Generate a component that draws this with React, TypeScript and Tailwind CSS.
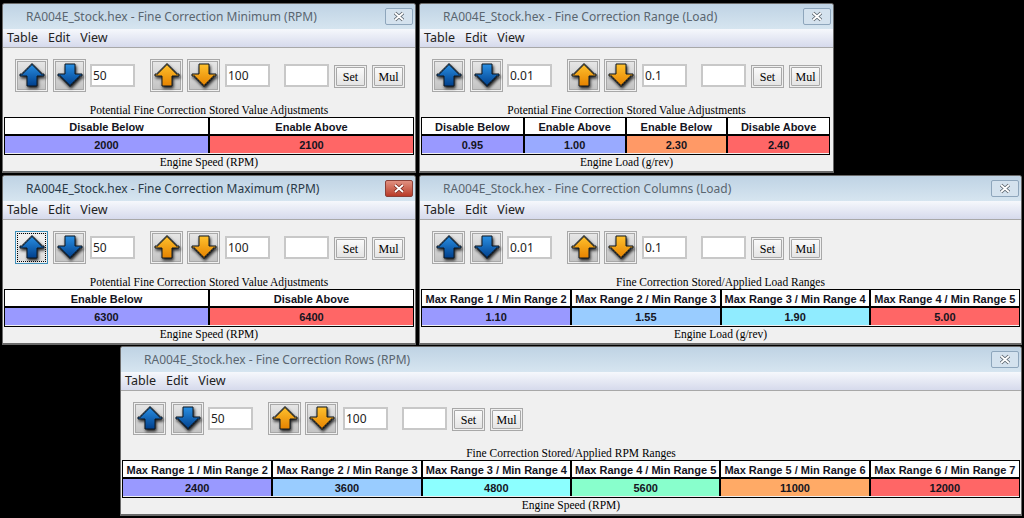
import React from "react";

const serif = "font-['Liberation_Serif',serif]";
const sans = "font-['Liberation_Sans',sans-serif]";
const ui = "font-['Noto_Sans',sans-serif]";

type Cell = { label: string; value: string; color: string };

type WindowProps = {
  title: string;
  caption: string;
  footer: string;
  position: string;
  tableWidth: string;
  cells: Cell[];
  fine?: boolean;
  active?: boolean;
  focused?: boolean;
};

function Arrow({ dir, tone }: { dir: "up" | "down"; tone: "blue" | "orange" }) {
  const id = `${tone}-${dir}`;
  const light = tone === "blue" ? "#2a90e4" : "#ffc22e";
  const dark = tone === "blue" ? "#003f8c" : "#e58200";
  const points =
    dir === "up"
      ? "12,1 14,1 14,3 16,3 16,5 18,5 18,7 20,7 20,9 22,9 22,11 25,11 25,13 18,13 18,23 8,23 8,13 1,13 1,11 4,11 4,9 6,9 6,7 8,7 8,5 10,5 10,3 12,3"
      : "8,1 18,1 18,11 25,11 25,13 22,13 22,15 20,15 20,17 18,17 18,19 16,19 16,21 14,21 14,23 12,23 12,21 10,21 10,19 8,19 8,17 6,17 6,15 4,15 4,13 1,13 1,11 8,11";
  return (
    <svg
      width="26"
      height="25"
      viewBox="0 0 26 25"
      className="drop-shadow-[1px_2px_1.5px_rgba(0,0,0,0.85)]"
    >
      <defs>
        <linearGradient id={id} x1="0" y1="0" x2="0" y2="1">
          <stop offset="0" stopColor={light} />
          <stop offset="1" stopColor={dark} />
        </linearGradient>
      </defs>
      <polygon points={points} fill={`url(#${id})`} stroke="#0c1620" strokeWidth="1" />
    </svg>
  );
}

function ArrowButton({
  dir,
  tone,
  focused,
}: {
  dir: "up" | "down";
  tone: "blue" | "orange";
  focused?: boolean;
}) {
  return (
    <button
      className={`flex h-[33px] w-[33px] items-center justify-center border bg-[#f0f0f0] p-px ${
        focused ? "border-[#3f8fb8]" : "border-[#a8a8a8]"
      }`}
    >
      <span
        className={`flex h-full w-full items-center justify-center border bg-gradient-to-b ${
          focused
            ? "border-dotted border-black from-[#f2f2f2] to-[#dcdcdc]"
            : "border-[#a8a8a8] from-[#e6e6e6] to-[#c4c4c4]"
        }`}
      >
        <Arrow dir={dir} tone={tone} />
      </span>
    </button>
  );
}

function Field({ value }: { value?: string }) {
  return (
    <div
      className={`flex h-[23px] w-[45px] items-center border-2 border-[#c8c8c8] bg-white pl-[1px] text-[12px] text-[#222] ${ui}`}
    >
      {value}
    </div>
  );
}

function TextButton({ label }: { label: string }) {
  return (
    <button className="h-[23px] w-[33px] border border-[#a8a8a8] bg-[#f0f0f0] p-px">
      <span
        className={`flex h-full w-full items-center justify-center rounded-[1px] border border-[#a8a8a8] bg-gradient-to-b from-[#fafafa] to-[#e4e4e4] text-[12px] text-black ${serif}`}
      >
        {label}
      </span>
    </button>
  );
}

function FineWindow({
  title,
  caption,
  footer,
  position,
  tableWidth,
  cells,
  fine,
  active,
  focused,
}: WindowProps) {
  return (
    <div
      className={`absolute flex h-[170px] flex-col overflow-hidden rounded-t-[3px] border border-b-2 border-[#6a6a6a] bg-[#f0f0f0] ${position}`}
    >
      <div className="flex h-[25px] shrink-0 items-center justify-between bg-gradient-to-b from-[#bfd3e4] to-[#d6e5f0] pl-[23px] pr-[2px]">
        <span
          className={`text-[12px] ${ui} ${active ? "text-[#2a3a48]" : "text-[#5a6670]"}`}
        >
          {title}
        </span>
        <span
          className={`flex h-[17px] w-[28px] items-center justify-center rounded-[2px] border ${
            active
              ? "border-[#8a4038] bg-gradient-to-b from-[#e09080] to-[#b83a28]"
              : "border-[#8ea6bc] bg-[#d4e2ee]"
          }`}
        >
          <svg width="14" height="11" viewBox="0 0 14 11">
            <path
              d="M3 2 L11 9 M11 2 L3 9"
              stroke={active ? "#7a2a20" : "#5a646e"}
              strokeWidth="3.6"
              fill="none"
            />
            <path
              d="M3 2 L11 9 M11 2 L3 9"
              stroke="#fff"
              strokeWidth="1.8"
              fill="none"
            />
          </svg>
        </span>
      </div>
      <div
        className={`flex h-[19px] shrink-0 items-center gap-[10px] border-b border-[#a8a8a8] bg-gradient-to-b from-[#f6f8fc] to-[#d6daec] pl-[4px] text-[12.5px] text-[#222] ${ui}`}
      >
        <span>Table</span>
        <span>Edit</span>
        <span>View</span>
      </div>
      <div className="mt-[11px] flex items-center pl-[12px]">
        <ArrowButton dir="up" tone="blue" focused={focused} />
        <div className="ml-[5px]">
          <ArrowButton dir="down" tone="blue" />
        </div>
        <div className="ml-[4px]">
          <Field value={fine ? "0.01" : "50"} />
        </div>
        <div className="ml-[15px]">
          <ArrowButton dir="up" tone="orange" />
        </div>
        <div className="ml-[4px]">
          <ArrowButton dir="down" tone="orange" />
        </div>
        <div className="ml-[5px]">
          <Field value={fine ? "0.1" : "100"} />
        </div>
        <div className="ml-[14px]">
          <Field />
        </div>
        <div className="ml-[5px]">
          <TextButton label="Set" />
        </div>
        <div className="ml-[5px]">
          <TextButton label="Mul" />
        </div>
      </div>
      <div
        className={`mt-[10px] h-[15px] text-center text-[11.5px] leading-[17px] text-black ${serif}`}
      >
        {caption}
      </div>
      <div
        className={`ml-[1px] grid grid-flow-col grid-rows-2 border border-black ${tableWidth}`}
      >
        {cells.flatMap((cell, i) => {
          const sides = `${i > 0 ? "border-l" : ""} ${
            i < cells.length - 1 ? "border-r" : ""
          }`;
          return [
            <div
              key={`${cell.label}-head`}
              className={`flex h-[18px] items-center justify-center whitespace-nowrap border-b-2 border-black bg-white pt-[2px] text-[11px] font-bold text-[#14141e] ${sans} ${sides}`}
            >
              {cell.label}
            </div>,
            <div
              key={`${cell.label}-value`}
              className={`flex h-[17px] items-center justify-center border-black pt-[2px] text-[11px] font-bold text-[#14141e] ${sans} ${cell.color} ${sides}`}
            >
              {cell.value}
            </div>,
          ];
        })}
      </div>
      <div
        className={`h-[15px] text-center text-[11.5px] leading-[15px] text-black ${serif}`}
      >
        {footer}
      </div>
    </div>
  );
}

export default function App() {
  return (
    <div className="relative h-[518px] w-[1024px] overflow-hidden bg-black">
      <FineWindow
        position="left-[2px] top-[3px] w-[414px]"
        tableWidth="mr-[1px] grid-cols-2"
        title="RA004E_Stock.hex - Fine Correction Minimum (RPM)"
        caption="Potential Fine Correction Stored Value Adjustments"
        footer="Engine Speed (RPM)"
        cells={[
          { label: "Disable Below", value: "2000", color: "bg-[#9999ff]" },
          { label: "Enable Above", value: "2100", color: "bg-[#ff6666]" },
        ]}
      />
      <FineWindow
        position="left-[419px] top-[3px] w-[415px]"
        tableWidth="mr-[3px] grid-cols-4"
        fine
        title="RA004E_Stock.hex - Fine Correction Range (Load)"
        caption="Potential Fine Correction Stored Value Adjustments"
        footer="Engine Load (g/rev)"
        cells={[
          { label: "Disable Below", value: "0.95", color: "bg-[#9999ff]" },
          { label: "Enable Above", value: "1.00", color: "bg-[#99aaff]" },
          { label: "Enable Below", value: "2.30", color: "bg-[#ff9966]" },
          { label: "Disable Above", value: "2.40", color: "bg-[#ff6666]" },
        ]}
      />
      <FineWindow
        position="left-[2px] top-[175px] w-[414px]"
        tableWidth="mr-[1px] grid-cols-2"
        active
        focused
        title="RA004E_Stock.hex - Fine Correction Maximum (RPM)"
        caption="Potential Fine Correction Stored Value Adjustments"
        footer="Engine Speed (RPM)"
        cells={[
          { label: "Enable Below", value: "6300", color: "bg-[#9999ff]" },
          { label: "Disable Above", value: "6400", color: "bg-[#ff6666]" },
        ]}
      />
      <FineWindow
        position="left-[419px] top-[175px] w-[603px]"
        tableWidth="mr-[1px] grid-cols-4"
        fine
        title="RA004E_Stock.hex - Fine Correction Columns (Load)"
        caption="Fine Correction Stored/Applied Load Ranges"
        footer="Engine Load (g/rev)"
        cells={[
          { label: "Max Range 1 / Min Range 2", value: "1.10", color: "bg-[#9999ff]" },
          { label: "Max Range 2 / Min Range 3", value: "1.55", color: "bg-[#99ccff]" },
          { label: "Max Range 3 / Min Range 4", value: "1.90", color: "bg-[#90ecff]" },
          { label: "Max Range 4 / Min Range 5", value: "5.00", color: "bg-[#ff6666]" },
        ]}
      />
      <FineWindow
        position="left-[120px] top-[346px] w-[902px]"
        tableWidth="mr-[1px] grid-cols-6"
        title="RA004E_Stock.hex - Fine Correction Rows (RPM)"
        caption="Fine Correction Stored/Applied RPM Ranges"
        footer="Engine Speed (RPM)"
        cells={[
          { label: "Max Range 1 / Min Range 2", value: "2400", color: "bg-[#9999ff]" },
          { label: "Max Range 2 / Min Range 3", value: "3600", color: "bg-[#99ccff]" },
          { label: "Max Range 3 / Min Range 4", value: "4800", color: "bg-[#8cffff]" },
          { label: "Max Range 4 / Min Range 5", value: "5600", color: "bg-[#88ffcc]" },
          { label: "Max Range 5 / Min Range 6", value: "11000", color: "bg-[#ffaa66]" },
          { label: "Max Range 6 / Min Range 7", value: "12000", color: "bg-[#ff6666]" },
        ]}
      />
    </div>
  );
}
